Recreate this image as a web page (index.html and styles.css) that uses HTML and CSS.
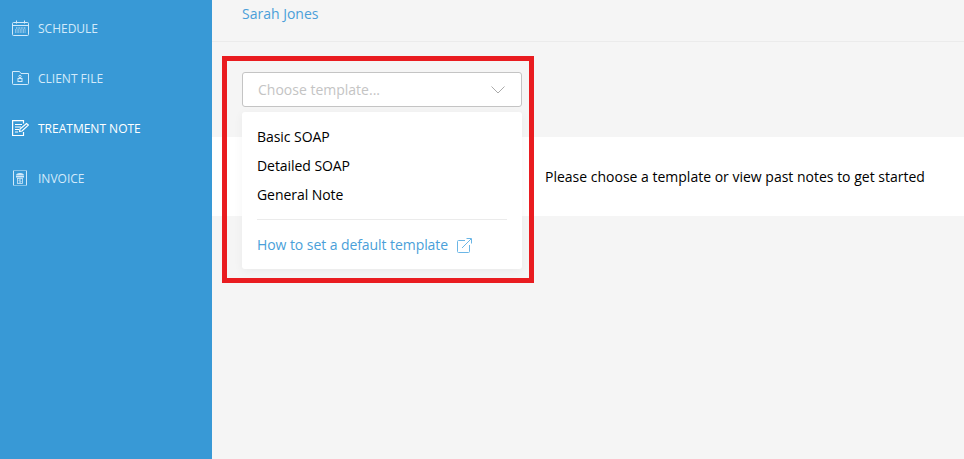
FILE: index.html
```html
<!DOCTYPE html>
<html lang="en">
<head>
    <meta charset="UTF-8">
    <title>Treatment Note</title>
    <link rel="stylesheet" href="styles.css">
</head>
<body>
    <!-- Sidebar -->
    <div class="sidebar">
        <a class="nav-item">
            <svg class="nav-icon" viewBox="0 0 17 16" fill="none" stroke="currentColor">
                <rect x="0.5" y="2.5" width="16" height="13" rx="1"/>
                <path d="M0.5 5.5H16.5M4.5 0.5V3.5M12.5 0.5V3.5"/>
                <path d="M4 8H14M3 10H14M3 12H14" stroke-dasharray="1 0.6"/>
            </svg>
            <span>SCHEDULE</span>
        </a>
        <a class="nav-item">
            <svg class="nav-icon" viewBox="0 0 17 16" fill="none" stroke="currentColor">
                <path d="M0.5 13.5V1.5H7.5L9 3.5H16.5V13.5Q16.5 14.500 15.5 14.500H1.5Q0.5 14.500 0.5 13.5Z"/>
                <rect x="6" y="8.5" width="4" height="3"/>
                <circle cx="8" cy="6.500" r="1.200"/>
            </svg>
            <span>CLIENT FILE</span>
        </a>
        <a class="nav-item active">
            <svg class="nav-icon" viewBox="0 0 17 16" fill="none" stroke="currentColor" stroke-width="1.2">
                <path d="M11.500 12V15.500H0.600V0.600H11.500V3.500"/>
                <path d="M3 4.500H10M3 7H9M3 9.500H7M3 12H6"/>
                <path d="M7.500 11.500L8 9L14.500 3.500L16.500 5L10 11Z"/>
            </svg>
            <span>TREATMENT NOTE</span>
        </a>
        <a class="nav-item">
            <svg class="nav-icon" viewBox="0 0 17 16" fill="none" stroke="currentColor">
                <path d="M1.500 1V15M14.500 1V15"/>
                <path d="M1.500 0.500H14.500M1.500 15.500H14.500" stroke-dasharray="1 1"/>
                <path d="M4 5.500Q4 3 8 3Q12 3 12 5.500Z" fill="currentColor" stroke="none"/>
                <rect x="4" y="6" width="8" height="1.500" fill="currentColor" stroke="none"/>
                <rect x="5.500" y="8.500" width="5" height="5" stroke-width="0.8"/>
                <path d="M9.200 9.800H7V11H9V12.200H6.800" stroke-width="0.7"/>
            </svg>
            <span>INVOICE</span>
        </a>
    </div>

    <!-- Main area -->
    <div class="main">
        <div class="patient-bar">
            <a class="patient-name">Sarah Jones</a>
        </div>

        <div class="content">
            <div class="template-select">
                <span>Choose template...</span>
                <svg class="chevron" viewBox="0 0 14 8" fill="none" stroke="currentColor">
                    <path d="M0.5 0.5L7 7L13.5 0.5"/>
                </svg>
            </div>

            <div class="template-menu">
                <div class="menu-item">Basic SOAP</div>
                <div class="menu-item">Detailed SOAP</div>
                <div class="menu-item">General Note</div>
                <div class="menu-footer">
                    <a class="help-link">How to set a default template</a>
                    <svg class="link-icon" viewBox="0 0 15 15" fill="none" stroke="currentColor">
                        <path d="M8 2.500H1.500Q0.500 2.500 0.500 3.500V13.500Q0.500 14.500 1.500 14.500H11.500Q12.500 14.500 12.500 13.500V7"/>
                        <path d="M5 10L14 1M9.500 0.500H14.500V5.500"/>
                    </svg>
                </div>
            </div>

            <div class="notice">Please choose a template or view past notes to get started</div>

            <!-- Red highlight from the screenshot -->
            <div class="highlight"></div>
        </div>
    </div>
</body>
</html>
```

FILE: styles.css
```css
/* Basic Styling */
body {
    display: flex;
    height: 459px;
    margin: 0;
    overflow: hidden;
    font-family: "Open Sans", Arial, sans-serif;
    font-size: 14px;
    color: #000;
    background-color: #f5f5f5;
}

/* Sidebar */
.sidebar {
    width: 212px;
    flex-shrink: 0;
    padding-top: 3px;
    background-color: #3899d6;
}

.nav-item {
    display: flex;
    align-items: center;
    height: 50px;
    padding-left: 12px;
    font-size: 12px;
    color: #d3eafa;
}

.nav-item.active {
    color: #fff;
}

.nav-icon {
    width: 17px;
    height: 16px;
    margin-right: 9px;
}

/* Main area */
.main {
    flex: 1;
}

.patient-bar {
    height: 41px;
    padding-left: 30px;
    border-bottom: 1px solid #ebebeb;
}

.patient-name {
    display: block;
    padding-top: 4px;
    line-height: 20px;
    color: #4a9fd9;
}

.content {
    position: relative;
    padding-top: 30px;
}

/* Template dropdown */
.template-select {
    display: flex;
    align-items: center;
    justify-content: space-between;
    box-sizing: border-box;
    width: 280px;
    height: 35px;
    margin-left: 30px;
    padding: 0 16px 0 15px;
    font-size: 14px;
    color: #c4c4c4;
    background-color: #fff;
    border: 1px solid #c4c4c4;
    border-radius: 3px;
}

.chevron {
    width: 14px;
    height: 8px;
    color: #aaa;
}

.template-menu {
    position: absolute;
    top: 70px;
    left: 30px;
    z-index: 10;
    box-sizing: border-box;
    width: 280px;
    height: 157px;
    padding: 10px 15px 0;
    background-color: #fff;
    border-radius: 3px;
    box-shadow: 0 2px 10px rgba(0, 0, 0, 0.05);
}

.menu-item {
    height: 29px;
    line-height: 29px;
    letter-spacing: -0.06px;
}

.menu-footer {
    display: flex;
    align-items: center;
    margin-top: 10px;
    padding-top: 15px;
    line-height: 20px;
    color: #4a9fd9;
    border-top: 1px solid #ebebeb;
}

.help-link {
    letter-spacing: -0.07px;
}

.link-icon {
    width: 15px;
    height: 15px;
    margin-left: 9px;
    color: #6bb6e6;
}

/* Notice band */
.notice {
    box-sizing: border-box;
    height: 79px;
    margin-top: 30px;
    padding-left: 333px;
    line-height: 79px;
    background-color: #fff;
}

/* Red annotation */
.highlight {
    position: absolute;
    top: 14px;
    left: 10px;
    z-index: 20;
    box-sizing: border-box;
    width: 312px;
    height: 227px;
    border: 5px solid #e91c20;
}
```
